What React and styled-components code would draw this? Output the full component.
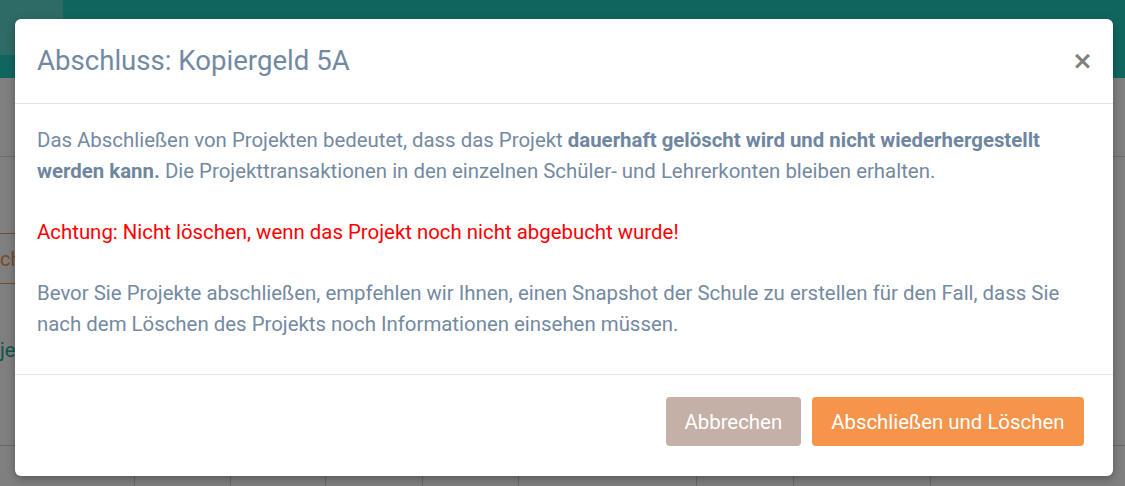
import React from 'react'
import styled, { createGlobalStyle } from 'styled-components'

const GlobalStyle = createGlobalStyle`
  html, body {
    margin: 0;
    padding: 0;
    height: 100%;
    overflow: hidden;
    background: #ffffff;
    font-family: Roboto, "Liberation Sans", sans-serif;
  }
`

const Page = styled.div`
  width: 1125px;
  height: 486px;
  position: relative;
  overflow: hidden;
  background: #ffffff;
`

const TopBar = styled.header`
  height: 78px;
  background: #21ccbf;
  display: flex;
  align-items: flex-start;
`

const LogoBlock = styled.div`
  width: 63px;
  height: 55px;
  background: #5cd6cc;
`

const Section = styled.div`
  height: ${(p) => p.h}px;
  box-sizing: border-box;
  padding-top: ${(p) => p.pt || 0}px;
  border-bottom: ${(p) => (p.line ? '1px solid #dcdcdc' : 'none')};
  display: flex;
  align-items: flex-start;
`

const Tab = styled.div`
  width: 40px;
  height: 49px;
  border-top: 1px solid #f5944a;
  border-bottom: 1px solid #f5944a;
  display: flex;
  align-items: center;
  font-size: 20px;
  color: #f5944a;
`

const Label = styled.span`
  font-size: 20px;
  line-height: 24px;
  color: #21a89d;
`

const TableRow = styled.div`
  display: grid;
  grid-template-columns: 135px 96px 95px 97px 96px 178px 97px 137px 1fr;
  height: 40px;
  border-top: 1px solid #d0d0d0;
`

const Cell = styled.div`
  border-right: 1px solid #d0d0d0;
  display: flex;
  justify-content: ${(p) => p.align || 'center'};
  padding: 0 12px;
  font-size: 18px;
  color: #111;
  &:last-child { border-right: none; }
`

const Dot = styled.span`
  width: 18px;
  height: 18px;
  margin-top: 6px;
  border-radius: 50%;
  background: ${(p) => p.c};
`

const Overlay = styled.div`
  position: absolute;
  inset: 0;
  background: rgba(0, 0, 0, 0.5);
`

const Modal = styled.div`
  position: absolute;
  left: 15px;
  top: 19px;
  width: 1098px;
  height: 457px;
  background: #ffffff;
  border-radius: 6px;
  box-shadow: 0 3px 9px rgba(0, 0, 0, 0.3);
  display: flex;
  flex-direction: column;
  box-sizing: border-box;
`

const ModalHeader = styled.div`
  height: 85px;
  box-sizing: border-box;
  padding: 0 20px 2px 22px;
  border-bottom: 1px solid #e3e3e6;
  display: flex;
  align-items: center;
  justify-content: space-between;
`

const Title = styled.h4`
  margin: 0;
  font-size: 27.6px;
  font-weight: 400;
  color: #7289a3;
`

const Close = styled.button`
  border: none;
  background: none;
  padding: 0;
  font-family: "DejaVu Sans", sans-serif;
  font-size: 25px;
  font-weight: 700;
  line-height: 1;
  color: #808080;
  cursor: pointer;
`

const ModalBody = styled.div`
  flex: 1;
  padding: 21px 22px 0 22px;
  border-bottom: 1px solid #e3e3e6;
`

const Para = styled.p`
  margin: 0 0 30.6px;
  font-size: 20.4px;
  line-height: 30.6px;
  color: ${(p) => (p.warn ? '#ff0000' : '#7489a2')};

  b {
    font-weight: 700;
    color: #6f86a0;
  }
`

const ModalFooter = styled.div`
  height: 101px;
  box-sizing: border-box;
  padding: 22px 29px 0 0;
  display: flex;
  justify-content: flex-end;
  align-items: flex-start;
  gap: 11px;
`

const Button = styled.button`
  height: 49px;
  padding: 0 ${(p) => p.px}px;
  border: none;
  border-radius: 4px;
  background: ${(p) => p.bg};
  color: #ffffff;
  font-family: Roboto, "Liberation Sans", sans-serif;
  font-size: 20.4px;
  cursor: pointer;
`

export default function App() {
  return (
    <>
      <GlobalStyle />
      <Page>
        <TopBar>
          <LogoBlock />
        </TopBar>
        <Section h={79} line />
        <Section h={150} pt={76}>
          <Tab>ch</Tab>
        </Section>
        <Section h={138} pt={31}>
          <Label>je</Label>
        </Section>
        <TableRow>
          <Cell />
          <Cell><Dot c="#4caf50" /></Cell>
          <Cell />
          <Cell><Dot c="#3c9f40" /></Cell>
          <Cell><Dot c="#bbbbbb" /></Cell>
          <Cell align="flex-start">Rundung</Cell>
          <Cell />
          <Cell />
          <Cell align="flex-end">3.10,00</Cell>
        </TableRow>
        <Overlay />
        <Modal>
          <ModalHeader>
            <Title>Abschluss: Kopiergeld 5A</Title>
            <Close aria-label="Schließen">×</Close>
          </ModalHeader>
          <ModalBody>
            <Para>
              Das Abschließen von Projekten bedeutet, dass das Projekt{' '}
              <b>dauerhaft gelöscht wird und nicht wiederhergestellt werden kann.</b>{' '}
              Die Projekttransaktionen in den einzelnen Schüler- und Lehrerkonten bleiben erhalten.
            </Para>
            <Para warn>Achtung: Nicht löschen, wenn das Projekt noch nicht abgebucht wurde!</Para>
            <Para>
              Bevor Sie Projekte abschließen, empfehlen wir Ihnen, einen Snapshot der Schule zu
              erstellen für den Fall, dass Sie nach dem Löschen des Projekts noch Informationen
              einsehen müssen.
            </Para>
          </ModalBody>
          <ModalFooter>
            <Button bg="#c4b0a7" px={18.5}>Abbrechen</Button>
            <Button bg="#f5944a" px={19.5}>Abschließen und Löschen</Button>
          </ModalFooter>
        </Modal>
      </Page>
    </>
  )
}
